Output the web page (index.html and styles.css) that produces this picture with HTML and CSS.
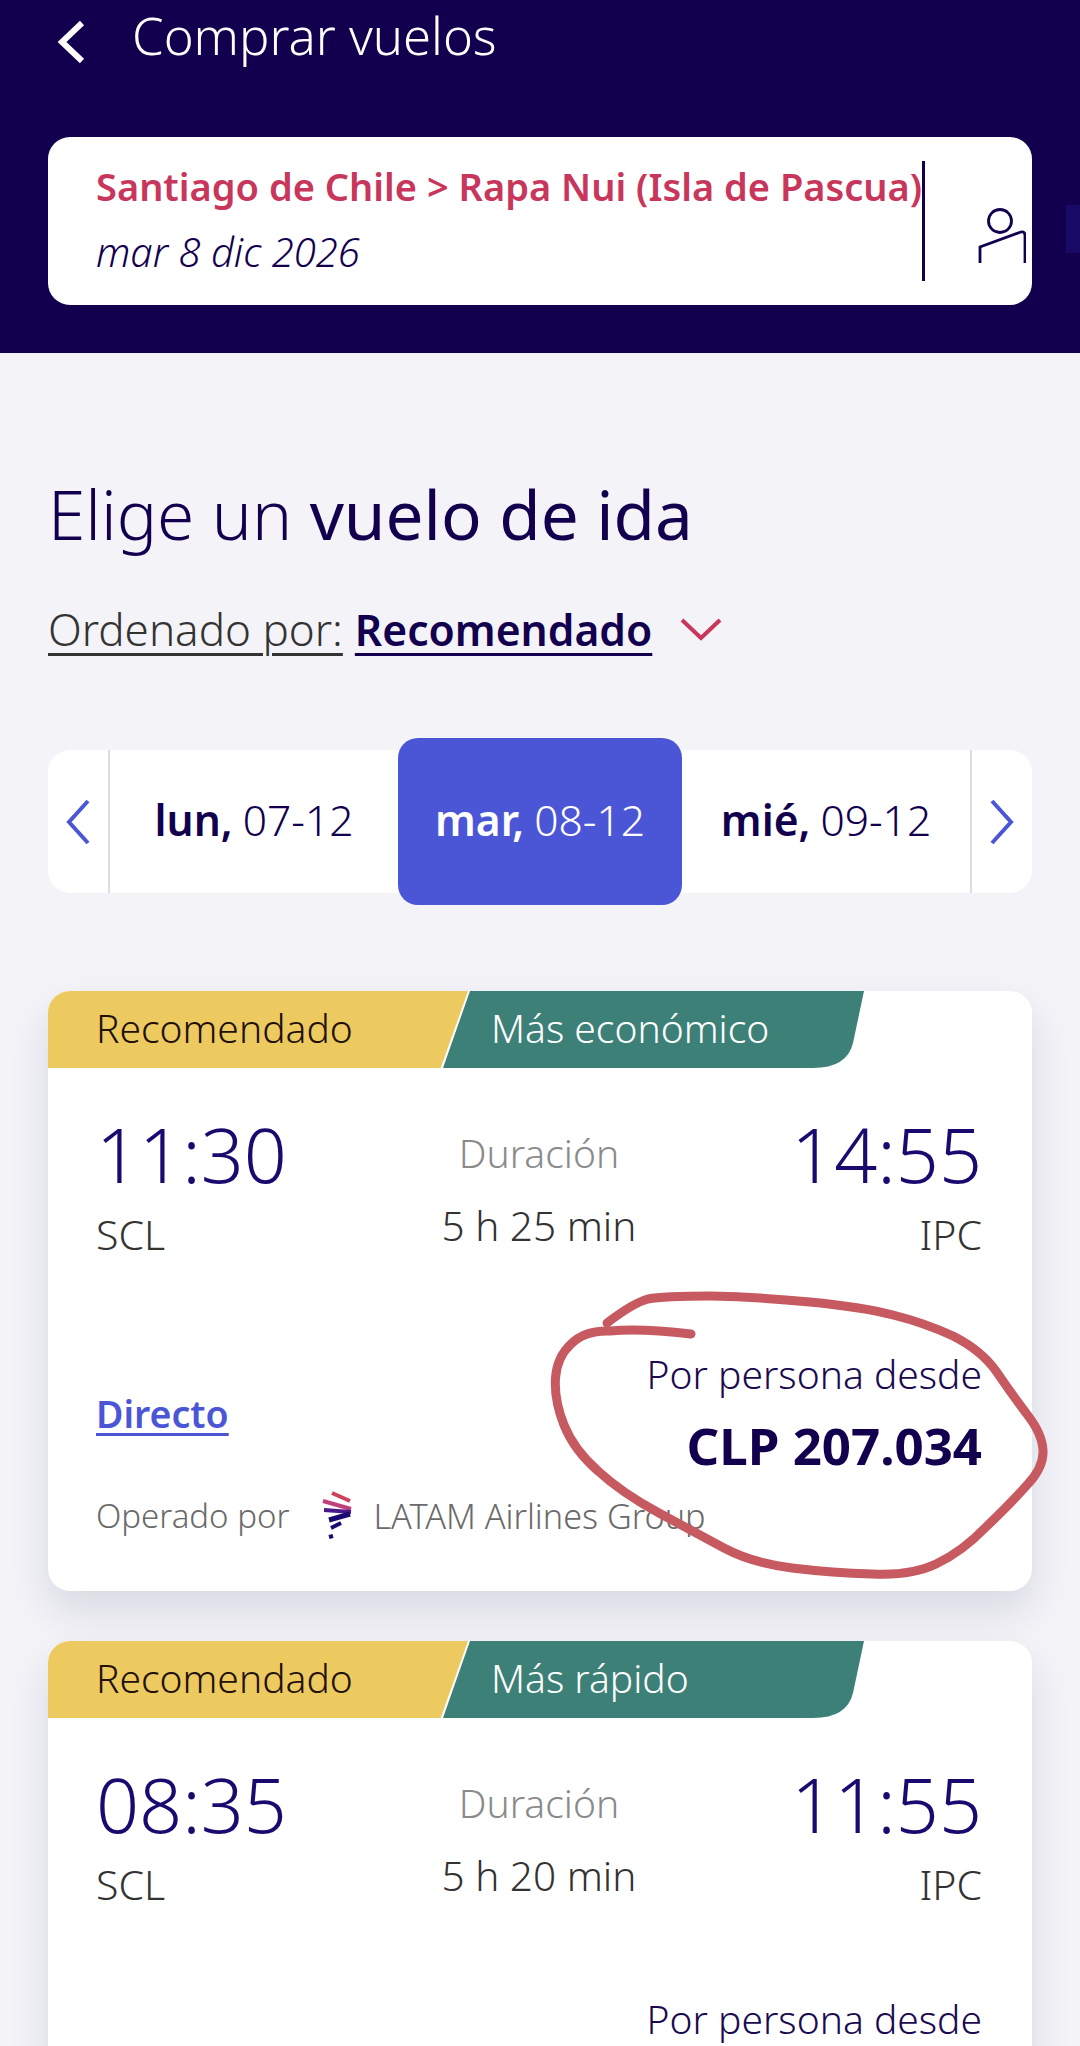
FILE: index.html
```html
<!DOCTYPE html>
<html lang="es">
<head>
<meta charset="utf-8">
<title>Comprar vuelos</title>
<link rel="stylesheet" href="styles.css">
</head>
<body>
<div class="page">
  <header class="topbar">
    <div class="nav">
      <svg class="back" width="30" height="44" viewBox="0 0 30 44"><path d="M27 3 L7 22 L27 41" fill="none" stroke="#fff" stroke-width="6"/></svg>
      <span class="nav-title">Comprar vuelos</span>
    </div>
    <div class="search">
      <div class="search-text">
        <div class="route">Santiago de Chile &gt; Rapa Nui (Isla de Pascua)</div>
        <div class="when">mar 8 dic 2026</div>
      </div>
      <div class="search-side">
        <svg width="50" height="60" viewBox="0 0 50 60"><g fill="none" stroke="#12004f" stroke-width="2.8"><circle cx="24" cy="13" r="11.5"/><path d="M4 55 V39 L45 24 Q49 23 49 28 V55"/></g></svg>
      </div>
    </div>
    <span class="cutoff"></span>
  </header>

  <main class="content">
    <h1 class="heading">Elige un <b>vuelo de ida</b></h1>
    <div class="sort">
      <span class="sort-label">Ordenado por:</span>
      <span class="sort-value">Recomendado</span>
      <svg width="42" height="24" viewBox="0 0 42 24"><path d="M2 3 L21 21 L40 3" fill="none" stroke="#c8365c" stroke-width="4"/></svg>
    </div>

    <div class="dates">
      <div class="arrow arrow-l"><svg width="26" height="46" viewBox="0 0 26 46"><path d="M23 2 L4 23 L23 44" fill="none" stroke="#4a56d6" stroke-width="4"/></svg></div>
      <div class="day"><b>lun,</b> 07-12</div>
      <div class="day day-on"><b>mar,</b> 08-12</div>
      <div class="day"><b>mié,</b> 09-12</div>
      <div class="arrow arrow-r"><svg width="26" height="46" viewBox="0 0 26 46"><path d="M3 2 L22 23 L3 44" fill="none" stroke="#4a56d6" stroke-width="4"/></svg></div>
    </div>

    <article class="card">
      <div class="tags">
        <span class="tag-a">Recomendado</span>
        <span class="tag-b">Más económico</span>
      </div>
      <div class="times">
        <div class="end"><div class="clock">11:30</div><div class="code">SCL</div></div>
        <div class="mid"><div class="mid-label">Duración</div><div class="mid-value">5 h 25 min</div></div>
        <div class="end end-r"><div class="clock">14:55</div><div class="code">IPC</div></div>
      </div>
      <div class="fare">
        <a class="direct">Directo</a>
        <div class="price">
          <div class="price-label">Por persona desde</div>
          <div class="price-value">CLP 207.034</div>
        </div>
      </div>
      <div class="operator">
        <span>Operado por</span>
        <svg class="logo" width="36" height="50" viewBox="8 4 36 50"><g fill="none"><path d="M21 7 L39 15" stroke="#d0405f" stroke-width="4"/><path d="M12 15 L40 23" stroke="#c0407a" stroke-width="4"/><path d="M13 24 L40 26" stroke="#4a1a8c" stroke-width="4"/><path d="M18 34 L39 28" stroke="#1a0a70" stroke-width="5"/><path d="M20 42 L30 37" stroke="#1a0a70" stroke-width="4"/><path d="M18 51 L22 50" stroke="#1a0a70" stroke-width="4"/></g></svg>
        <span class="carrier">LATAM Airlines Group</span>
      </div>
    </article>

    <article class="card">
      <div class="tags">
        <span class="tag-a">Recomendado</span>
        <span class="tag-b">Más rápido</span>
      </div>
      <div class="times">
        <div class="end"><div class="clock">08:35</div><div class="code">SCL</div></div>
        <div class="mid"><div class="mid-label">Duración</div><div class="mid-value">5 h 20 min</div></div>
        <div class="end end-r"><div class="clock">11:55</div><div class="code">IPC</div></div>
      </div>
      <div class="fare">
        <div class="price price-end">
          <div class="price-label">Por persona desde</div>
        </div>
      </div>
    </article>
  </main>

  <svg class="scribble" width="1080" height="2046" viewBox="0 0 1080 2046"><path d="M691 1334 Q640 1328 610 1331 Q585 1330 571 1344 Q557 1357 555.5 1378 Q554 1400 564 1425 Q574 1450 598 1471 Q622 1493 659 1513 Q696 1533 724 1548 Q752 1563 792 1568 Q833 1573 872 1574 Q911 1576 936 1564 Q962 1552 986 1527 Q1011 1503 1027 1485 Q1044 1467 1043 1450 Q1042 1433 1026 1413 Q1011 1393 996 1371 Q981 1350 953 1336 Q925 1323 893 1315 Q862 1307 810 1302 Q759 1297 711 1296 Q663 1296 648 1299 Q633 1303 607 1323" fill="none" stroke="#c65a60" stroke-width="9" stroke-linecap="round" stroke-linejoin="round"/></svg>
</div>
</body>
</html>
```

FILE: styles.css
```css
* { box-sizing: border-box; }
html, body { margin: 0; padding: 0; }
body { font-family: "Noto Sans", "Open Sans", sans-serif; color: #12004f; background: #f3f3f8; }
.page { position: relative; width: 1080px; height: 2046px; overflow: hidden; background: #f3f3f8; }

.topbar { position: relative; height: 353px; background: #12004f; padding: 0 48px; }
.nav { display: flex; align-items: center; height: 72px; gap: 48px; padding-left: 7px; color: #fff; }
.back { margin-top: 12px; }
.nav-title { font-size: 50.8px; font-weight: 300; line-height: 72px; white-space: nowrap; margin-left: -1px; }
.search { display: flex; align-items: center; height: 168px; margin-top: 65px; background: #fff; border-radius: 22px; padding-left: 48px; }
.search-text { width: 829px; height: 120px; border-right: 3px solid #12004f; }
.route { font-size: 38px; font-weight: 600; line-height: 56px; color: #c8365c; white-space: nowrap; margin-top: -3px; }
.when { font-size: 40px; font-style: italic; font-weight: 300; line-height: 50px; margin-top: 13px; color: #12004f; }
.search-side { flex: 1; display: flex; justify-content: flex-end; padding: 34px 6px 0 0; }
.cutoff { position: absolute; right: 0; top: 205px; width: 14px; height: 48px; background: #1a0a68; }

.content { padding: 0 48px; }
.heading { margin: 121px 0 0; font-size: 67.4px; line-height: 80px; font-weight: 300; color: #12004f; white-space: nowrap; }
.heading b { font-weight: 400; }
.sort { display: flex; align-items: center; gap: 12px; margin-top: 45px; height: 60px; white-space: nowrap; }
.sort-label { font-size: 44px; font-weight: 300; color: #333; text-decoration: underline; text-underline-offset: 7px; text-decoration-thickness: 3px; }
.sort-value { font-size: 42.6px; font-weight: 600; color: #12004f; text-decoration: underline; text-underline-offset: 7px; text-decoration-thickness: 3px; }
.sort svg { margin-left: 16px; }

.dates { display: flex; align-items: center; height: 143px; margin-top: 91px; background: #fff; border-radius: 22px; }
.arrow { display: flex; align-items: center; justify-content: center; width: 62px; height: 143px; }
.arrow-l { border-right: 2px solid #dcdce4; }
.arrow-r { border-left: 2px solid #dcdce4; }
.day { flex: 1; height: 143px; padding-bottom: 4px; display: flex; align-items: center; justify-content: center; gap: 10px; font-size: 42.5px; font-weight: 300; color: #12004f; white-space: nowrap; }
.day b { font-weight: 600; }
.day-on { flex: 0 0 284px; height: 167px; background: #4a56d6; color: #fff; border-radius: 20px; }

.card { margin-top: 98px; height: 600px; background: #fff; border-radius: 22px; box-shadow: 0 20px 40px rgba(30, 30, 70, .12); overflow: hidden; }
.card + .card { margin-top: 50px; }
.tags { display: flex; height: 77px; font-size: 39px; line-height: 74px; font-weight: 300; white-space: nowrap; }
.tag-a { width: 420px; padding-left: 48px; background: #edca60; color: #22100a; clip-path: polygon(0 0, 100% 0, 93.5% 100%, 0 100%); }
.tag-b { width: 422px; margin-left: -25px; padding-left: 48px; background: #3d8077; color: #fff; clip-path: path("M27 0 H421 L410 52 Q404 77 370 77 H0 Z"); }

.times { display: flex; justify-content: space-between; padding: 41px 50px 0 48px; height: 248px; }
.end { width: 300px; }
.end-r { text-align: right; }
.clock { font-size: 75.5px; line-height: 90px; font-weight: 300; color: #1a0a70; }
.code { font-size: 41px; line-height: 46px; font-weight: 300; color: #333; margin-top: 12px; }
.mid { text-align: center; width: 260px; padding-top: 19px; }
.mid-label { font-size: 39px; line-height: 50px; font-weight: 300; color: #8a8a8a; }
.mid-value { font-size: 40.5px; line-height: 50px; font-weight: 300; color: #333; margin-top: 23px; }

.fare { display: flex; justify-content: space-between; align-items: center; padding: 0 50px 0 48px; height: 168px; }
.direct { font-size: 37.5px; font-weight: 600; color: #4a56d6; text-decoration: underline; text-underline-offset: 5px; margin-top: 26px; }
.price { text-align: right; padding-top: 26px; }
.price-end { margin-left: auto; padding-top: 0; align-self: flex-start; margin-top: 28px; }
.price-label { font-size: 39px; line-height: 50px; font-weight: 300; color: #1a0a50; }
.price-value { font-size: 51px; line-height: 64px; font-weight: 700; color: #12004f; margin-top: 14px; }

.operator { display: flex; align-items: center; gap: 30px; padding-left: 48px; margin-top: 6px; font-size: 33px; font-weight: 300; color: #6a6a6a; white-space: nowrap; }
.carrier { font-size: 34.2px; }
.logo { margin-right: -12px; }

.scribble { position: absolute; left: 0; top: 0; pointer-events: none; }
```
